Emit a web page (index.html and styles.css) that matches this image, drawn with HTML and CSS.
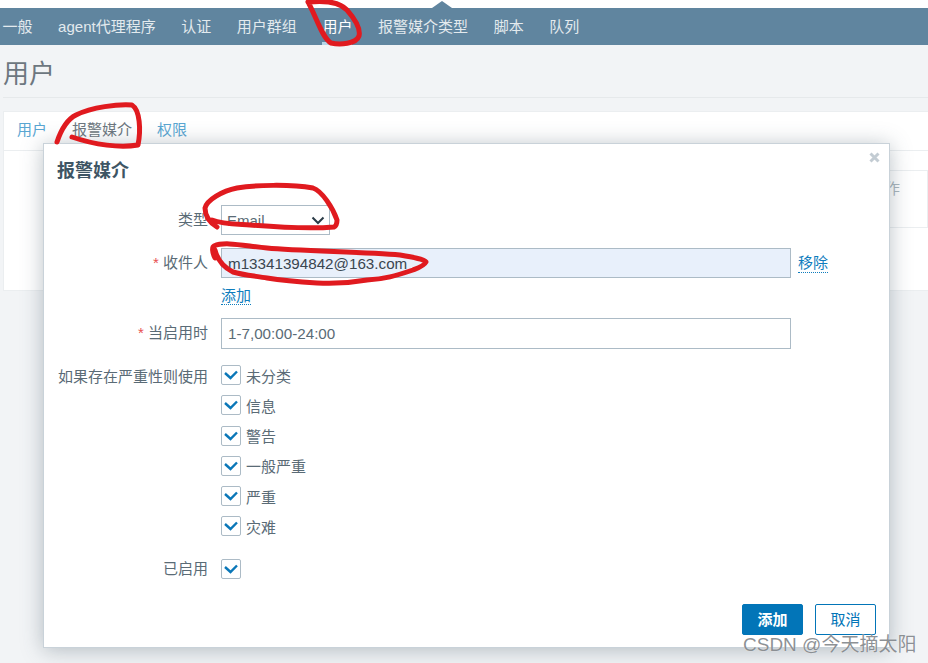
FILE: index.html
```html
<!DOCTYPE html>
<html lang="zh">
<head>
    <meta charset="UTF-8">
    <meta name="viewport" content="width=device-width, initial-scale=1.0">
    <title>用户 | 报警媒介</title>
    <link rel="stylesheet" href="styles.css">
</head>
<body>
    <nav class="topnav">
        <a href="#">一般</a>
        <a href="#">agent代理程序</a>
        <a href="#">认证</a>
        <a href="#">用户群组</a>
        <a href="#" class="selected">用户</a>
        <a href="#">报警媒介类型</a>
        <a href="#">脚本</a>
        <a href="#">队列</a>
    </nav>
    <div class="nav-notch"></div>

    <header class="page-title">
        <h1>用户</h1>
    </header>

    <main class="card">
        <div class="tabs">
            <a href="#">用户</a>
            <span class="tab-current">报警媒介</span>
            <a href="#">权限</a>
        </div>
        <div class="card-body">
            <div class="media-table">操作</div>
        </div>
    </main>

    <!-- 报警媒介弹窗 -->
    <div class="modal">
        <button class="close-btn" aria-label="关闭">
            <svg width="11" height="11" viewBox="0 0 11 11"><path d="M1.500 1.500l8 8M9.500 1.500l-8 8"/></svg>
        </button>
        <h2>报警媒介</h2>

        <form class="form-grid">
            <label>类型</label>
            <div class="select-box">
                <span>Email</span>
                <svg width="14" height="9" viewBox="0 0 14 9"><path d="M1.500 1.500L7 7l5.500-5.500"/></svg>
            </div>

            <label><i>*</i> 收件人</label>
            <div class="sendto-row">
                <div class="text-box filled">m13341394842@163.com</div>
                <a href="#" class="link">移除</a>
            </div>

            <span></span>
            <div class="add-row"><a href="#" class="link">添加</a></div>

            <label><i>*</i> 当启用时</label>
            <div class="text-box">1-7,00:00-24:00</div>

            <label class="label-top">如果存在严重性则使用</label>
            <ul class="severity-list">
                <li><span class="check"><svg width="14" height="10" viewBox="0 0 14 10"><path d="M1 3l5.500 5L13 1.500"/></svg></span>未分类</li>
                <li><span class="check"><svg width="14" height="10" viewBox="0 0 14 10"><path d="M1 3l5.500 5L13 1.500"/></svg></span>信息</li>
                <li><span class="check"><svg width="14" height="10" viewBox="0 0 14 10"><path d="M1 3l5.500 5L13 1.500"/></svg></span>警告</li>
                <li><span class="check"><svg width="14" height="10" viewBox="0 0 14 10"><path d="M1 3l5.500 5L13 1.500"/></svg></span>一般严重</li>
                <li><span class="check"><svg width="14" height="10" viewBox="0 0 14 10"><path d="M1 3l5.500 5L13 1.500"/></svg></span>严重</li>
                <li><span class="check"><svg width="14" height="10" viewBox="0 0 14 10"><path d="M1 3l5.500 5L13 1.500"/></svg></span>灾难</li>
            </ul>

            <label class="label-enabled">已启用</label>
            <div class="enabled-row">
                <span class="check"><svg width="14" height="10" viewBox="0 0 14 10"><path d="M1 3l5.500 5L13 1.500"/></svg></span>
            </div>
        </form>

        <div class="modal-footer">
            <button class="btn btn-primary">添加</button>
            <button class="btn btn-alt">取消</button>
        </div>
    </div>

    <!-- 截图上的红色手绘圈 -->
    <svg class="scribble" width="928" height="663" viewBox="0 0 928 663">
        <path d="M308 2C318 1 338 0 347 10C354 18 361 28 359 36C356 44 340 45 331 43C322 38 316 16 308 2"/>
        <path d="M57 142C61 130 66 120 76 115C92 107 118 104 132 105C140 110 141 130 138 145C120 148 95 145 72 137"/>
        <path d="M217 227C209 222 205 215 205 208C207 200 222 191 237 188C255 185 290 184 313 188C322 191 333 208 337 220C337 224 336 226 334 227C310 229 275 227 250 225C235 224 222 224 212 220"/>
        <path d="M215 258C212 252 212 247 214 246C225 241 245 246 267 248C300 251 365 252 400 255C412 257 424 259 426 262C424 266 418 268 413 270C395 276 385 279 367 280C350 283 335 284 317 283C300 282 285 281 267 278C255 276 243 275 233 272C225 268 218 262 215 250"/>
    </svg>

    <div class="watermark">CSDN @今天摘太阳</div>
</body>
</html>
```

FILE: styles.css
```css
* {
    margin: 0;
    padding: 0;
    box-sizing: border-box;
}

body {
    position: relative;
    width: 928px;
    height: 663px;
    overflow: hidden;
    padding-top: 8px;
    background: linear-gradient(#fff 8px, #f2f4f6 8px);
    font-family: "Liberation Sans", "Noto Sans CJK SC", sans-serif;
    font-size: 15px;
    color: #5a6b76;
}

a {
    text-decoration: none;
}

.topnav {
    display: flex;
    gap: 25.6px;
    height: 37px;
    padding-left: 2.5px;
    background: #60859f;
}

.topnav a {
    line-height: 37px;
    color: #e3eaee;
}

.topnav a.selected {
    color: #fff;
    box-shadow: inset 0 -3px 0 #b5d6e8;
}

.nav-notch {
    position: absolute;
    top: 1px;
    left: 432px;
    border: 10px solid transparent;
    border-top: 0;
    border-bottom: 7px solid #60859f;
}

.page-title {
    height: 53px;
    margin-left: 3px;
    border-bottom: 1px solid #e6e9eb;
}

.page-title h1 {
    padding-top: 13px;
    font-size: 26px;
    font-weight: 400;
    line-height: 32px;
    color: #6d7780;
}

.card {
    height: 180px;
    margin: 13px 0 0 3px;
    background: #fff;
    border: 1px solid #ebeef0;
    border-right: 0;
}

.tabs {
    display: flex;
    gap: 25px;
    height: 39px;
    padding-left: 13px;
    line-height: 36px;
    border-bottom: 1px solid #ebeef0;
}

.tabs a {
    color: #5aa6d2;
}

.tab-current {
    color: #6d7780;
}

.card-body {
    padding: 19px 0 0 500px;
}

.media-table {
    height: 58px;
    padding: 9px 27px 0 0;
    border: 1px solid #ebeef0;
    line-height: 18px;
    text-align: right;
    color: #a9b6bd;
    white-space: nowrap;
}

/* Modal */
.modal {
    position: absolute;
    top: 143px;
    left: 43px;
    width: 847px;
    height: 505px;
    padding: 15px 13px 12px;
    background: #fff;
    border: 1px solid #c9d2d9;
    box-shadow: 0 2px 20px rgba(60, 80, 95, 0.35);
}

.modal h2 {
    font-size: 18px;
    font-weight: 700;
    line-height: 24px;
    color: #3e5564;
}

.close-btn {
    position: absolute;
    top: 8px;
    right: 9px;
    display: flex;
    background: none;
    border: none;
}

.close-btn svg path {
    fill: none;
    stroke: #c3ccd3;
    stroke-width: 3;
}

.form-grid {
    display: grid;
    grid-template-columns: 151px 1fr;
    column-gap: 13px;
    margin-top: 22px;
}

.form-grid label {
    text-align: right;
    line-height: 30px;
    white-space: nowrap;
}

.form-grid label i {
    font-style: normal;
    color: #e8504f;
}

.form-grid .label-top {
    margin-top: 13px;
    line-height: 30px;
}

.form-grid .label-enabled {
    margin-top: 7px;
}

.select-box {
    display: flex;
    align-items: center;
    justify-content: space-between;
    width: 109px;
    height: 30px;
    margin-bottom: 13px;
    padding: 0 4px 0 5px;
    border: 1px solid #acbbc6;
}

.select-box svg path {
    fill: none;
    stroke: #2b3b47;
    stroke-width: 2;
}

.sendto-row {
    display: flex;
    align-items: center;
    gap: 7px;
}

.text-box {
    width: 570px;
    height: 31px;
    padding: 0 6px;
    font-size: 15.2px;
    line-height: 29px;
    border: 1px solid #acbbc6;
    color: #5a6b76;
}

.text-box.filled {
    height: 30px;
    line-height: 29px;
    background: #e8f0fb;
    color: #3a4650;
}

.link {
    color: #0f7dbd;
    border-bottom: 1px dotted #0f7dbd;
    line-height: 18px;
}

.add-row {
    height: 40px;
    padding-top: 9px;
}

.severity-list {
    list-style: none;
    margin-top: 16px;
}

.severity-list li {
    display: flex;
    align-items: center;
    gap: 5px;
    height: 20px;
    margin-bottom: 10.3px;
}

.check {
    display: flex;
    align-items: center;
    justify-content: center;
    width: 20px;
    height: 20px;
    background: #fff;
    border: 1px solid #acbbc6;
    border-radius: 2px;
}

.check svg path {
    fill: none;
    stroke: #0a77b8;
    stroke-width: 2.400;
}

.enabled-row {
    display: flex;
    align-items: center;
    height: 30px;
    margin-top: 7px;
}

.modal-footer {
    position: absolute;
    right: 13px;
    bottom: 12px;
    display: flex;
    gap: 12px;
}

.btn {
    width: 61px;
    height: 31px;
    padding-bottom: 2px;
    border-radius: 2px;
    font-family: inherit;
    font-size: 15px;
}

.btn-primary {
    background: #0275b8;
    border: 1px solid #0275b8;
    color: #fff;
    font-weight: 700;
}

.btn-alt {
    background: #fff;
    border: 1px solid #0275b8;
    color: #0275b8;
}

.scribble {
    position: absolute;
    top: 0;
    left: 0;
    pointer-events: none;
}

.scribble path {
    fill: none;
    stroke: #e01a1f;
    stroke-width: 5;
    stroke-linecap: round;
    stroke-linejoin: round;
}

.watermark {
    position: absolute;
    top: 632px;
    left: 743px;
    font-size: 19px;
    line-height: 26px;
    color: rgba(120, 125, 130, 0.85);
    text-shadow: 0 0 1px rgba(255, 255, 255, 0.8);
    white-space: nowrap;
}
```
